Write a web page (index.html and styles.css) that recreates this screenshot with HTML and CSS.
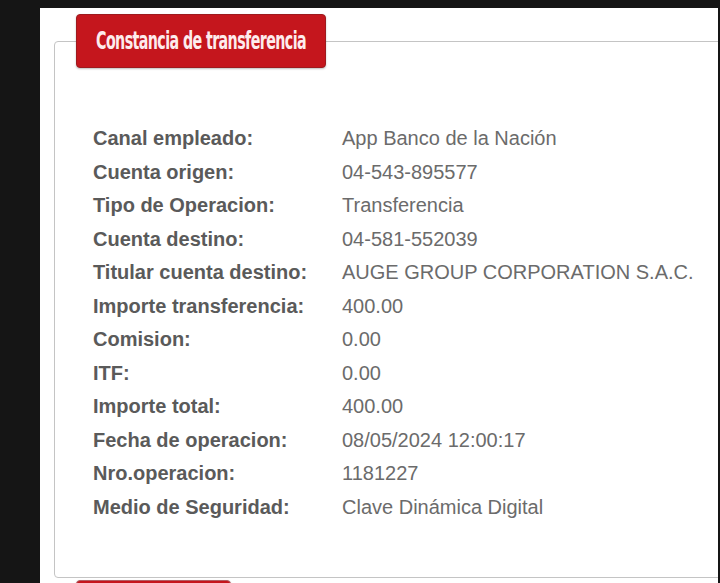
FILE: index.html
```html
<!DOCTYPE html>
<html lang="es">
<head>
<meta charset="utf-8">
<title>Constancia de transferencia</title>
<link rel="stylesheet" href="styles.css">
</head>
<body>
<div class="page">
  <div class="panel">
    <fieldset class="box">
      <legend class="tag"><span class="tag-text">Constancia de transferencia</span></legend>
      <dl class="rows">
        <dt>Canal empleado:</dt><dd>App Banco de la Nación</dd>
        <dt>Cuenta origen:</dt><dd>04-543-895577</dd>
        <dt>Tipo de Operacion:</dt><dd>Transferencia</dd>
        <dt>Cuenta destino:</dt><dd>04-581-552039</dd>
        <dt>Titular cuenta destino:</dt><dd>AUGE GROUP CORPORATION S.A.C.</dd>
        <dt>Importe transferencia:</dt><dd>400.00</dd>
        <dt>Comision:</dt><dd>0.00</dd>
        <dt>ITF:</dt><dd>0.00</dd>
        <dt>Importe total:</dt><dd>400.00</dd>
        <dt>Fecha de operacion:</dt><dd>08/05/2024 12:00:17</dd>
        <dt>Nro.operacion:</dt><dd>1181227</dd>
        <dt>Medio de Seguridad:</dt><dd>Clave Dinámica Digital</dd>
      </dl>
    </fieldset>
    <fieldset class="box next">
      <legend class="tag short"></legend>
    </fieldset>
  </div>
</div>
</body>
</html>
```

FILE: styles.css
```css
html, body {
  margin: 0;
  padding: 0;
  background: #151515;
}
.page {
  padding: 8px 2px 0 40px;
  height: 575px;
  overflow: hidden;
}
.panel {
  background: #ffffff;
  height: 700px;
  overflow: hidden;
  padding: 0 0 0 14px;
}
.box {
  margin: 6px -40px 0 0;
  padding: 54px 0 53px 21px;
  border: 1px solid #c4c4c4;
  border-radius: 4px;
  min-width: 0;
}
.tag {
  box-sizing: border-box;
  width: 250px;
  height: 54px;
  padding: 0;
  background: #c5161d;
  border: 1px solid #9e1a1e;
  border-radius: 4px;
  box-shadow: 0 1px 2px rgba(0,0,0,0.25);
  display: flex;
  justify-content: center;
  align-items: center;
}
.tag-text {
  flex: none;
  color: #fdeced;
  font-family: "DejaVu Sans Condensed", "DejaVu Sans", sans-serif;
  font-stretch: condensed;
  font-weight: bold;
  font-size: 24px;
  letter-spacing: -0.9px;
  line-height: 28px;
  white-space: nowrap;
  transform: scaleX(0.66);
}
.rows {
  margin: 0 0 0 17px;
  display: grid;
  grid-template-columns: 249px auto;
  font-family: "Liberation Sans", Arial, sans-serif;
  font-size: 20px;
  line-height: 33.5px;
}
.rows dt {
  font-weight: bold;
  color: #5a5a5a;
  white-space: nowrap;
}
.rows dd {
  margin: 0;
  color: #6b6b6b;
  white-space: nowrap;
}
.next {
  margin-top: 2px;
  padding: 40px 0 0 21px;
}
.short {
  width: 155px;
  border-color: #b06065;
}
```
